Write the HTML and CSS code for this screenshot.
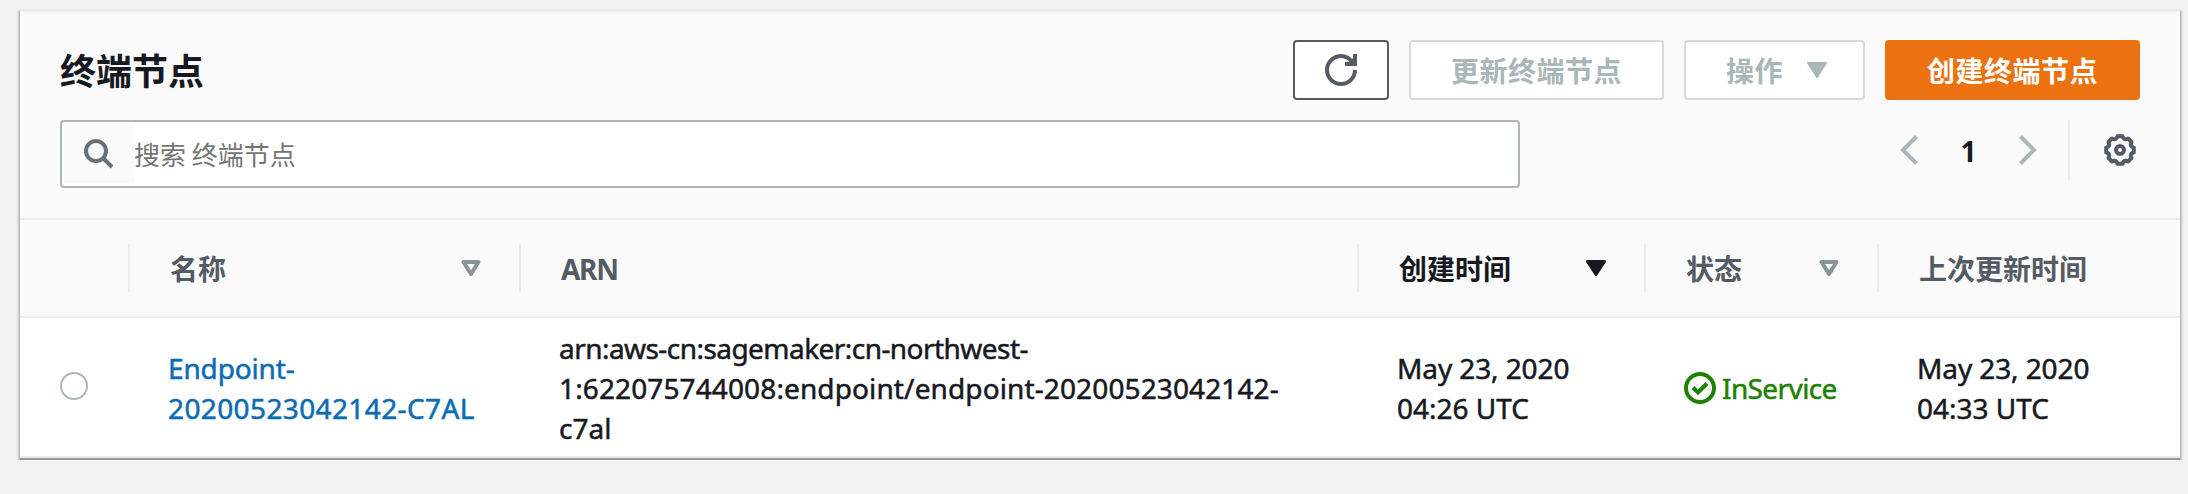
FILE: index.html
```html
<!DOCTYPE html>
<html lang="zh-CN">
<head>
<meta charset="utf-8">
<title>终端节点</title>
<link rel="stylesheet" href="styles.css">
</head>
<body>
<section class="card">
  <header class="card-header">
    <div class="title-row">
      <h1 class="title">终端节点</h1>
      <div class="actions">
        <button class="btn btn-refresh" aria-label="刷新">
          <svg class="icon" viewBox="0 0 16 16"><path d="M15 8a7 7 0 1 1-7-7c2.500 0 4.500 1.200 6 3.500"/><path d="M10 5h5V0"/><path class="fill" d="M11 5l3-3v3z"/></svg>
        </button>
        <button class="btn btn-disabled">更新终端节点</button>
        <button class="btn btn-disabled btn-menu">操作
          <svg class="caret" viewBox="0 0 20 16"><path d="M1 1h18l-9 14z"/></svg>
        </button>
        <button class="btn btn-primary">创建终端节点</button>
      </div>
    </div>
    <div class="tool-row">
      <div class="search">
        <div class="search-icon">
          <svg viewBox="0 0 30 30"><circle cx="12" cy="12" r="10"/><path d="M19 19l9 9"/></svg>
        </div>
        <span class="placeholder">搜索 终端节点</span>
      </div>
      <div class="pager">
        <svg class="chevron" viewBox="0 0 18 30"><path d="M16.500 1.500L3 15l13.500 13.500"/></svg>
        <span class="page">1</span>
        <svg class="chevron" viewBox="0 0 18 30"><path d="M1.500 1.500L15 15 1.500 28.500"/></svg>
        <span class="rule"></span>
        <svg class="gear" viewBox="0 0 32 32"><path d="M13.600 2.200L18.400 2.200Q19.800 6.800 24 4.500L27.500 8Q25.200 12.200 29.800 13.600L29.800 18.400Q25.200 19.800 27.500 24L24 27.500Q19.800 25.200 18.400 29.800L13.600 29.800Q12.200 25.200 8 27.500L4.500 24Q6.800 19.800 2.200 18.400L2.200 13.600Q6.800 12.200 4.500 8L8 4.500Q12.200 6.800 13.600 2.200Z"/><circle cx="16" cy="16" r="4"/></svg>
      </div>
    </div>
  </header>
  <table class="table">
    <colgroup><col class="c-select"><col class="c-name"><col class="c-arn"><col class="c-created"><col class="c-status"><col class="c-updated"></colgroup>
    <thead>
      <tr>
        <th><div class="head"></div></th>
        <th><div class="head">名称<svg class="sort" viewBox="0 0 20 16"><path d="M2.500 2h15L10 14z"/></svg></div></th>
        <th><div class="head"><span class="head-arn">ARN</span></div></th>
        <th><div class="head head-active">创建时间<svg class="sort sort-on" viewBox="0 0 20 16"><path d="M1.500 1.500h17L10 14.500z"/></svg></div></th>
        <th><div class="head">状态<svg class="sort" viewBox="0 0 20 16"><path d="M2.500 2h15L10 14z"/></svg></div></th>
        <th><div class="head head-last">上次更新时间</div></th>
      </tr>
    </thead>
    <tbody>
      <tr>
        <td class="select"><span class="radio"></span></td>
        <td><a class="link"><span class="name-prefix">Endpoint-</span><br><span class="name-id">20200523042142-C7AL</span></a></td>
        <td><span class="arn-service">arn:aws-cn:sagemaker:cn-northwest-</span><br><span class="arn-resource">1:622075744008:endpoint/endpoint-20200523042142-</span><br>c7al</td>
        <td><span class="date">May 23, 2020</span><br>04:26 UTC</td>
        <td><div class="status"><svg viewBox="0 0 32 32"><circle cx="16" cy="16" r="14"/><path d="M9 15.500l5 5 9-9"/></svg><span class="status-text">InService</span></div></td>
        <td><span class="date">May 23, 2020</span><br>04:33 UTC</td>
      </tr>
    </tbody>
  </table>
</section>
</body>
</html>
```
FILE: styles.css
```css
* { box-sizing: border-box; }
body {
  margin: 0;
  padding: 10px 8px 0 20px;
  background: #f2f2f2;
  color: #16191f;
  font: 28px/40px "Noto Sans", "Noto Sans CJK SC", sans-serif;
}
svg { display: block; flex: none; fill: none; }
.card {
  border-top: 2px solid #eaeded;
  border-bottom: 2px solid #94999b;
  background: #fff;
  box-shadow: 0 1px 2px rgba(0, 28, 36, .25), 2px 1px 2px rgba(0, 28, 36, .2), -2px 1px 2px rgba(0, 28, 36, .2);
}
.card-header {
  height: 208px;
  padding: 28px 40px 0;
  background: #fafafa;
  border-bottom: 2px solid #eaeded;
}
.title-row, .tool-row { display: flex; justify-content: space-between; }
.title-row { height: 60px; }
.title { margin: 0; padding-top: 2px; font-size: 36px; line-height: 60px; font-weight: 700; }
.actions { display: flex; gap: 20px; }
.btn {
  display: flex;
  align-items: center;
  height: 60px;
  padding: 2px 40px 0;
  border: 2px solid #545b64;
  border-radius: 4px;
  background: #fff;
  font: inherit;
  font-weight: 700;
  letter-spacing: .5px;
}
.btn-refresh { width: 96px; padding: 0 30px; }
.icon { width: 32px; height: 32px; stroke: #545b64; stroke-width: 2; }
.icon .fill { fill: #545b64; stroke: none; }
.btn-disabled { border-color: #d5dbdb; color: #aab7b8; }
.btn-menu { width: 181px; padding-right: 36px; justify-content: space-between; }
.caret { width: 20px; height: 16px; margin-top: -2px; fill: #aab7b8; stroke: #aab7b8; stroke-width: 2; stroke-linejoin: round; }
.btn-primary { background: #ec7211; border-color: #ec7211; color: #fff; }
.tool-row { margin-top: 20px; }
.search {
  display: flex;
  align-items: center;
  width: 1460px;
  height: 68px;
  padding-left: 2px;
  border: 2px solid #aab7b8;
  border-radius: 4px;
  background: #fff;
  font-size: 26px;
}
.search-icon { width: 70px; height: 58px; padding: 14px 0 0 20px; background: #fafafa; }
.search-icon svg { width: 30px; height: 30px; stroke: #687078; stroke-width: 4; }
.placeholder { color: #757575; font-family: "Noto Sans CJK SC", sans-serif; }
.pager { display: flex; align-items: center; height: 60px; padding-right: 4px; }
.chevron { width: 18px; height: 30px; stroke: #aab7b8; stroke-width: 4; }
.page { width: 101px; padding-top: 2px; text-align: center; font-weight: 700; }
.rule { width: 2px; height: 60px; margin: 0 34px 0 31px; background: #eaeded; }
.gear { width: 32px; height: 32px; stroke: #545b64; stroke-width: 4; stroke-linejoin: round; }
.table { width: 2160px; table-layout: fixed; border-collapse: separate; border-spacing: 0; }
.c-select { width: 110px; }
.c-name { width: 391px; }
.c-arn { width: 838px; }
.c-created { width: 287px; }
.c-status { width: 233px; }
.c-updated { width: 301px; }
th { height: 98px; padding: 0; background: #fafafa; border-bottom: 2px solid #eaeded; }
.head {
  display: flex;
  align-items: center;
  justify-content: space-between;
  height: 48px;
  padding: 2px 38px 0 40px;
  border-right: 2px solid #eaeded;
  color: #545b64;
}
.head-active { color: #16191f; }
.head-last { border: 0; }
.head-arn { letter-spacing: -1.3px; }
.sort { width: 20px; height: 16px; margin-top: -2px; stroke: #879596; stroke-width: 4; stroke-linejoin: round; }
.sort-on { fill: #16191f; stroke: #16191f; stroke-width: 3; }
td {
  height: 140px;
  padding: 10px 0 8px 38px;
  border-bottom: 2px solid #eaeded;
  vertical-align: middle;
  white-space: nowrap;
  -webkit-text-stroke: .5px currentColor;
}
.select { padding-left: 40px; }
.radio { display: block; width: 28px; height: 28px; margin-top: -4px; border: 2px solid #aab7b8; border-radius: 50%; }
.link { color: #0a6cb2; }
.name-prefix { letter-spacing: -.15px; }
.name-id { letter-spacing: .38px; }
.arn-service { letter-spacing: -.55px; }
.arn-resource { letter-spacing: .12px; }
.date { letter-spacing: -.1px; }
.status { display: flex; align-items: center; gap: 6px; color: #1d8102; }
.status svg { width: 32px; height: 32px; stroke: #1d8102; stroke-width: 4; }
.status-text { letter-spacing: -.6px; }
```
